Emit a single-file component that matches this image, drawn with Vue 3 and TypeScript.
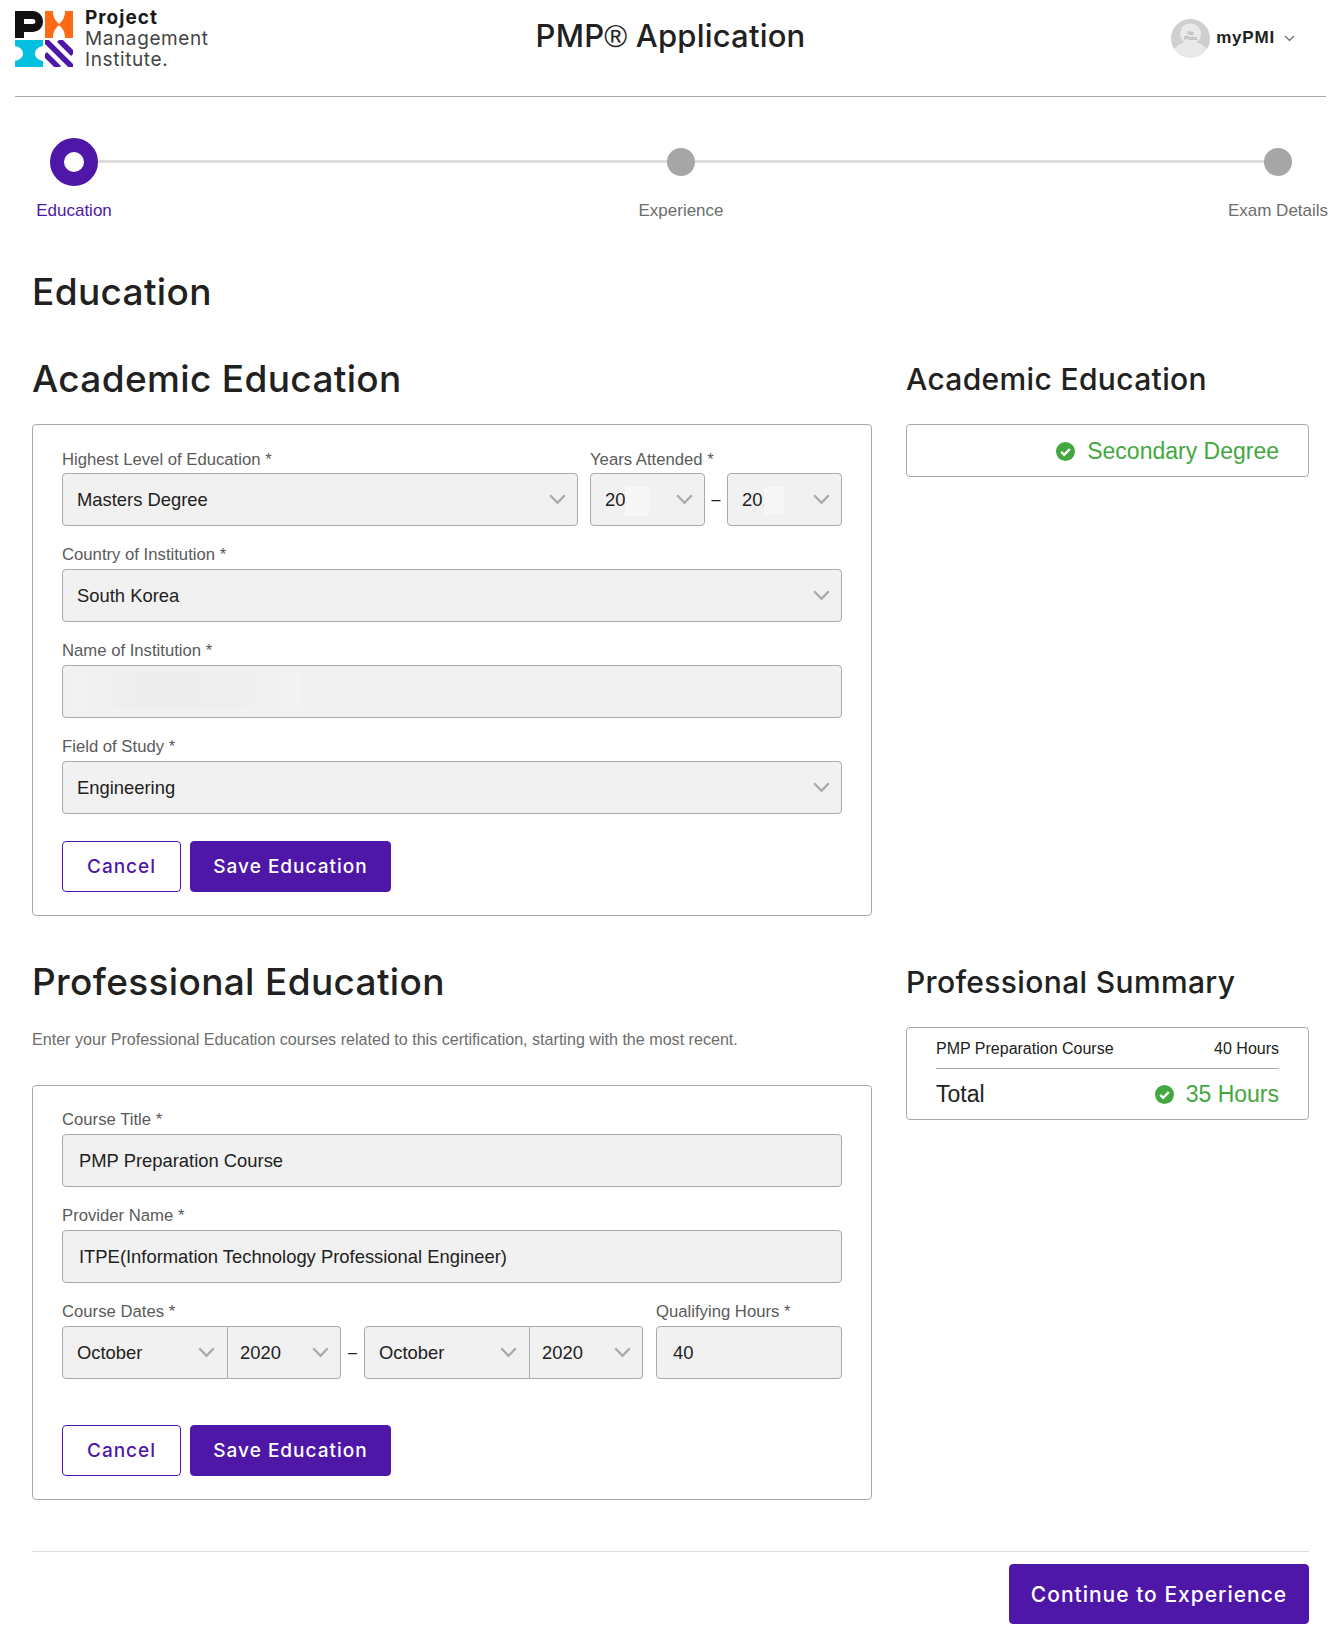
<script setup lang="ts">
const steps = [
  { label: "Education", active: true },
  { label: "Experience", active: false },
  { label: "Exam Details", active: false },
];
</script>

<template>
  <div class="page">
    <header class="top">
      <div class="logo">
        <svg class="logo-mark" width="58" height="58" viewBox="0 0 58 58">
          <defs>
            <clipPath id="stripes"><rect x="30" y="30" width="28" height="27" /></clipPath>
          </defs>
          <path fill-rule="evenodd" d="M0 1h18a10 10 0 0 1 10 10v1a10 10 0 0 1-10 10H9v6H0zM9 9v5h9a2.5 2.5 0 0 0 0-5z" fill="#111" />
          <path d="M30 1h8c0 7 3 10 6 13 3-3 6-6 6-13h8v27h-8c0-7-3-10-6-13-3 3-6 6-6 13h-8z" fill="#ff6a14" />
          <path d="M0 30h28v6c-5 1-8 4-8 7.5s3 6.5 8 7.5v6H0v-6c5-1 8-4 8-7.5S5 37 0 36z" fill="#05bfe0" />
          <g clip-path="url(#stripes)" stroke="#4f17a8" stroke-width="5.5">
            <line x1="30" y1="30" x2="58" y2="58" />
            <line x1="44" y1="30" x2="58" y2="44" />
            <line x1="30" y1="44" x2="44" y2="58" />
          </g>
        </svg>
        <div class="logo-text">
          <b>Project</b>
          <span>Management</span>
          <span>Institute.</span>
        </div>
      </div>
      <div class="app-title">PMP<span class="reg">®</span> Application</div>
      <div class="user">
        <div class="avatar"><span>No<br />Photo</span></div>
        <span class="user-name">myPMI</span>
        <svg width="11" height="7" viewBox="0 0 11 7"><path d="M1 1l4.5 4.5L10 1" fill="none" stroke="#666" stroke-width="1.2" /></svg>
      </div>
    </header>

    <div class="steps">
      <div v-for="s in steps" :key="s.label" class="step" :class="{ active: s.active }">
        <div class="dot-box"><i class="dot"></i></div>
        <div class="step-label">{{ s.label }}</div>
      </div>
    </div>

    <h1 class="page-title">Education</h1>

    <main class="content">
      <section>
        <h2 class="head">Academic Education</h2>
        <div class="card">
          <div class="row">
            <div class="field grow">
              <label>Highest Level of Education *</label>
              <div class="control select">Masters Degree<svg class="chev" viewBox="0 0 17 11"><path d="M1.2 1.2l7.3 7.6 7.3-7.6" /></svg></div>
            </div>
            <div class="field years">
              <label>Years Attended *</label>
              <div class="pair">
                <div class="control select masked">20<i class="patch one"></i><svg class="chev" viewBox="0 0 17 11"><path d="M1.2 1.2l7.3 7.6 7.3-7.6" /></svg></div>
                <span class="dash">–</span>
                <div class="control select masked">201<i class="patch two"></i><svg class="chev" viewBox="0 0 17 11"><path d="M1.2 1.2l7.3 7.6 7.3-7.6" /></svg></div>
              </div>
            </div>
          </div>
          <div class="field">
            <label>Country of Institution *</label>
            <div class="control select">South Korea<svg class="chev" viewBox="0 0 17 11"><path d="M1.2 1.2l7.3 7.6 7.3-7.6" /></svg></div>
          </div>
          <div class="field">
            <label>Name of Institution *</label>
            <div class="control masked"><i class="smudge"></i></div>
          </div>
          <div class="field">
            <label>Field of Study *</label>
            <div class="control select">Engineering<svg class="chev" viewBox="0 0 17 11"><path d="M1.2 1.2l7.3 7.6 7.3-7.6" /></svg></div>
          </div>
          <div class="actions">
            <button class="btn ghost">Cancel</button>
            <button class="btn solid">Save Education</button>
          </div>
        </div>
      </section>

      <aside>
        <h2 class="head small">Academic Education</h2>
        <div class="summary degree">
          <svg class="ok" width="19" height="19" viewBox="0 0 19 19"><circle cx="9.5" cy="9.5" r="9.5" fill="#43a83f" /><path d="M5.2 9.8l3 3 5.6-5.8" fill="none" stroke="#fff" stroke-width="2.4" /></svg>
          <span>Secondary Degree</span>
        </div>
      </aside>

      <section>
        <h2 class="head">Professional Education</h2>
        <p class="intro">Enter your Professional Education courses related to this certification, starting with the most recent.</p>
        <div class="card">
          <div class="field">
            <label>Course Title *</label>
            <div class="control text">PMP Preparation Course</div>
          </div>
          <div class="field">
            <label>Provider Name *</label>
            <div class="control text">ITPE(Information Technology Professional Engineer)</div>
          </div>
          <div class="row">
            <div class="field">
              <label>Course Dates *</label>
              <div class="pair">
                <div class="joined">
                  <div class="control select month">October<svg class="chev" viewBox="0 0 17 11"><path d="M1.2 1.2l7.3 7.6 7.3-7.6" /></svg></div>
                  <div class="control select year">2020<svg class="chev" viewBox="0 0 17 11"><path d="M1.2 1.2l7.3 7.6 7.3-7.6" /></svg></div>
                </div>
                <span class="dash">–</span>
                <div class="joined">
                  <div class="control select month">October<svg class="chev" viewBox="0 0 17 11"><path d="M1.2 1.2l7.3 7.6 7.3-7.6" /></svg></div>
                  <div class="control select year">2020<svg class="chev" viewBox="0 0 17 11"><path d="M1.2 1.2l7.3 7.6 7.3-7.6" /></svg></div>
                </div>
              </div>
            </div>
            <div class="field hours">
              <label>Qualifying Hours *</label>
              <div class="control text">40</div>
            </div>
          </div>
          <div class="actions spaced">
            <button class="btn ghost">Cancel</button>
            <button class="btn solid">Save Education</button>
          </div>
        </div>
      </section>

      <aside>
        <h2 class="head small">Professional Summary</h2>
        <div class="summary hours-box">
          <div class="line">
            <span>PMP Preparation Course</span>
            <span>40 Hours</span>
          </div>
          <div class="total">
            <span>Total</span>
            <span class="good">
              <svg class="ok" width="19" height="19" viewBox="0 0 19 19"><circle cx="9.5" cy="9.5" r="9.5" fill="#43a83f" /><path d="M5.2 9.8l3 3 5.6-5.8" fill="none" stroke="#fff" stroke-width="2.4" /></svg>
              35 Hours
            </span>
          </div>
        </div>
      </aside>
    </main>

    <footer class="foot">
      <button class="btn solid big">Continue to Experience</button>
    </footer>
  </div>
</template>

<style>
html,
body {
  margin: 0;
  background: #fff;
}
</style>

<style scoped>
* {
  box-sizing: border-box;
}

.page {
  width: 1340px;
  height: 1634px;
  overflow: hidden;
  font-family: "Liberation Sans", Arial, sans-serif;
  color: #212121;
}

.top {
  height: 97px;
  margin: 0 14px 0 15px;
  border-bottom: 1px solid #aaa;
  display: grid;
  grid-template-columns: 1fr auto 1fr;
  align-items: start;
}

.logo {
  display: flex;
  gap: 12px;
  padding-top: 10px;
}

.logo-text {
  display: flex;
  flex-direction: column;
  font-family: Inter, sans-serif;
  font-size: 19px;
  line-height: 21px;
  letter-spacing: 0.6px;
  color: #444;
  margin-top: -3px;
}

.logo-text b {
  font-weight: 700;
  letter-spacing: 1px;
  color: #1a1a1a;
}

.app-title {
  font-family: Inter, sans-serif;
  font-size: 31px;
  font-weight: 450;
  letter-spacing: 0.2px;
  line-height: 40px;
  margin-top: 16px;
}

.reg {
  font-family: "Liberation Sans", sans-serif;
  font-weight: 400;
}

.user {
  display: flex;
  align-items: center;
  justify-self: end;
  margin: 19px 31px 0 0;
}

.avatar {
  width: 39px;
  height: 39px;
  border-radius: 50%;
  background: radial-gradient(circle at 50% 112%, #e9e9e9 0 44%, transparent 45%), radial-gradient(circle at 50% 38%, #e9e9e9 0 33%, #cfcfcf 34%);
  display: flex;
  align-items: center;
  justify-content: center;
  font-size: 5px;
  line-height: 5px;
  text-align: center;
  color: #999;
  margin-right: 6px;
}

.avatar span {
  margin-top: -6px;
}

.user-name {
  font-size: 17px;
  font-weight: 700;
  letter-spacing: 0.8px;
  margin: -2px 9px 0 0;
}

.steps {
  position: relative;
  display: grid;
  grid-template-columns: 607px 597px 120px;
  margin: 40px 0 0 14px;
}

.steps::before {
  content: "";
  position: absolute;
  left: 60px;
  width: 1204px;
  top: 23px;
  height: 3px;
  background: #ddd;
}

.step {
  position: relative;
  width: 120px;
  text-align: center;
}

.dot-box {
  height: 49px;
  display: flex;
  align-items: center;
  justify-content: center;
}

.dot {
  width: 28px;
  height: 28px;
  border-radius: 50%;
  background: #a6a6a6;
}

.active .dot {
  width: 48px;
  height: 48px;
  background: #fff;
  border: 14.5px solid #4f17a8;
}

.step-label {
  margin-top: 15px;
  font-size: 17px;
  line-height: 20px;
  color: #6d6d6d;
  white-space: nowrap;
}

.active .step-label {
  color: #4f17a8;
}

.page-title,
.head {
  margin: 0;
  font-family: Inter, sans-serif;
  font-weight: 450;
  letter-spacing: 0.35px;
  line-height: 44px;
}

.page-title {
  font-size: 37px;
  margin: 49px 0 0 32px;
}

.content {
  display: grid;
  grid-template-columns: 840px 403px;
  column-gap: 34px;
  row-gap: 44px;
  margin: 43px 0 0 32px;
}

.head {
  font-size: 37px;
  margin-bottom: 23px;
}

.head.small {
  font-size: 30px;
}

.intro {
  margin: 25px 0 36px;
  font-size: 16.1px;
  line-height: 20px;
  color: #6d6d6d;
}

.card {
  border: 1px solid #aaa;
  border-radius: 4px;
  padding: 24px 29px 23px;
}

.row {
  display: flex;
  gap: 12px;
}

.grow {
  flex: 1;
}

.years {
  width: 252px;
}

.years .dash {
  width: 22px;
}

.hours {
  flex: 1;
  margin-left: 1px;
}

.field {
  margin-bottom: 19px;
}

.field label {
  display: block;
  height: 24px;
  line-height: 20px;
  font-size: 16.7px;
  color: #5a5a5a;
}

.grow label,
.years label {
  line-height: 21px;
}

.control {
  position: relative;
  height: 53px;
  display: flex;
  align-items: center;
  background: #f1f1f1;
  border: 1px solid #aaa;
  border-radius: 4px;
  padding: 0 16px;
  font-size: 18.4px;
  color: #212121;
}

.select {
  justify-content: space-between;
  padding: 0 11px 0 14px;
}

.chev {
  width: 17px;
  height: 11px;
  flex: none;
}

.chev path {
  fill: none;
  stroke: #aaa;
  stroke-width: 2.3;
}

.pair {
  display: flex;
  align-items: center;
}

.pair > .control {
  flex: 1;
}

.dash {
  width: 23px;
  text-align: center;
  font-size: 16px;
  color: #222;
}

.joined {
  display: flex;
  width: 279px;
}

.month {
  width: 166px;
  border-radius: 4px 0 0 4px;
  padding-right: 12px;
}

.year {
  width: 113px;
  padding-left: 12px;
  border-left: 0;
  border-radius: 0 4px 4px 0;
}

.patch {
  position: absolute;
  background: #f7f7f7;
}

.patch.one {
  left: 34px;
  top: 13px;
  width: 24px;
  height: 29px;
}

.patch.two {
  left: 36px;
  top: 13px;
  width: 20px;
  height: 27px;
}

.smudge {
  position: absolute;
  left: 10px;
  top: 6px;
  width: 228px;
  height: 37px;
  background: linear-gradient(90deg, #f3f3f3, #ededed 30%, #eeeeee 70%, #f3f3f3);
}

.actions {
  display: flex;
  gap: 9px;
  margin-top: 27px;
}

.btn {
  height: 51px;
  border-radius: 4px;
  font-family: Inter, sans-serif;
  font-size: 19px;
  font-weight: 500;
  letter-spacing: 1px;
  border: 1px solid #4f17a8;
  cursor: pointer;
}

.ghost {
  width: 119px;
  background: #fff;
  color: #4f17a8;
}

.solid {
  width: 201px;
  background: #4f17a8;
  color: #fff;
}

.big {
  width: 300px;
  height: 60px;
  font-size: 21px;
  letter-spacing: 1px;
}

.summary {
  border: 1px solid #aaa;
  border-radius: 4px;
}

.degree {
  height: 53px;
  display: flex;
  align-items: center;
  justify-content: flex-end;
  gap: 12px;
  padding: 1px 29px 0 0;
  font-size: 23px;
  color: #43a83f;
}

.hours-box {
  height: 93px;
  padding: 0 29px;
}

.line {
  height: 41px;
  display: flex;
  align-items: center;
  justify-content: space-between;
  padding-top: 1px;
  font-size: 16px;
  border-bottom: 1px solid #aaa;
}

.total {
  height: 50px;
  display: flex;
  align-items: center;
  justify-content: space-between;
  font-size: 23px;
}

.good {
  display: flex;
  align-items: center;
  gap: 12px;
  color: #43a83f;
}

.foot {
  display: flex;
  justify-content: flex-end;
  margin: 51px 31px 0 32px;
  padding-top: 12px;
  border-top: 1px solid #ddd;
}
</style>
